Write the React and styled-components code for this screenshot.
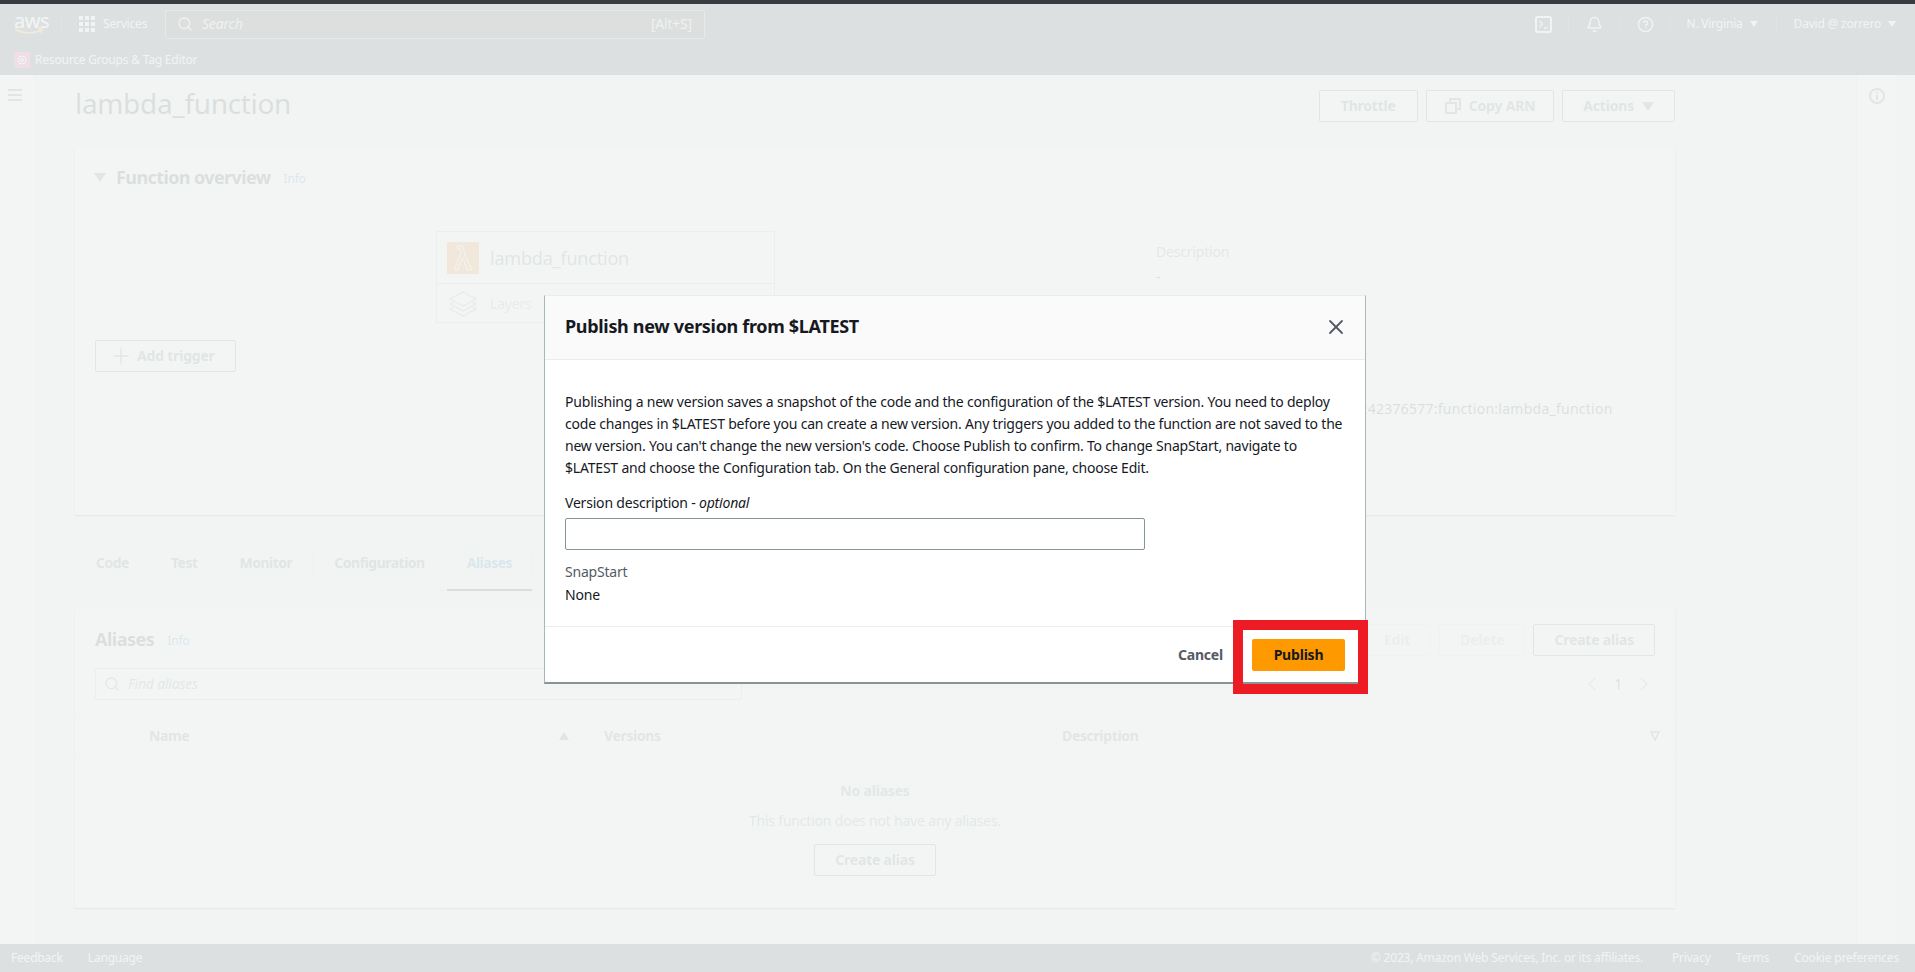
import styled, { createGlobalStyle } from "styled-components"
import { Bell, ChevronLeft, ChevronRight, CircleHelp, Plus, Search, X } from "lucide-react"

const GlobalStyle = createGlobalStyle`
  html, body {
    margin: 0;
    height: 100%;
    overflow: hidden;
    background: #f2f3f3;
  }
  * {
    box-sizing: border-box;
  }
  body {
    font-family: "Noto Sans", "Liberation Sans", sans-serif;
    font-size: 14px;
    line-height: 22px;
    letter-spacing: -0.2px;
    color: #16191f;
  }
`

const Screen = styled.div`
  position: relative;
  width: 1915px;
  height: 972px;
  display: flex;
  flex-direction: column;
  overflow: hidden;
`

const TopStrip = styled.div`
  height: 4px;
  flex: none;
  background: #3a3b40;
`

const Header = styled.header`
  flex: none;
  height: 71px;
  background: #252c35;
  color: #f2f3f3;
  display: flex;
  flex-direction: column;
`

const NavRow = styled.div`
  height: 41px;
  display: flex;
  align-items: center;
  padding: 0 0 1px 14px;
`

const Logo = styled.div`
  position: relative;
  width: 30px;
  height: 24px;
  color: #fff;
  font-size: 20px;
  line-height: 17px;
  text-align: center;
  letter-spacing: -0.5px;
  svg {
    position: absolute;
    left: 0;
    top: 15px;
  }
`

const NavDivider = styled.span`
  width: 1px;
  height: 20px;
  background: #414d5c;
  margin: ${(p) => p.$margin || "0"};
`

const NavText = styled.span`
  margin-left: 8px;
  font-size: 12px;
  color: #f2f3f3;
  white-space: nowrap;
`

const SearchBox = styled.div`
  width: 540px;
  height: 29px;
  margin-left: auto;
  padding: 0 12px 0 11px;
  display: flex;
  align-items: center;
  gap: 9px;
  background: #222324;
  border: 1px solid #879596;
  border-radius: 2px;
  color: #d5dbdb;
  em {
    flex: 1;
    font-size: 14px;
  }
`

const NavLeft = styled.div`
  width: 691px;
  display: flex;
  align-items: center;
`

const NavRight = styled.div`
  margin-left: auto;
  display: flex;
  align-items: center;
`

const NavIcon = styled.span`
  display: flex;
  width: 50px;
  justify-content: center;
  color: #f2f3f3;
`

const Caret = styled.span`
  display: inline-block;
  width: 0;
  height: 0;
  border-left: ${(p) => p.$size ?? 4}px solid transparent;
  border-right: ${(p) => p.$size ?? 4}px solid transparent;
  border-top: ${(p) => (p.$size ?? 4) * 1.5}px solid currentColor;
  margin-left: ${(p) => p.$gap ?? 7}px;
`

const NavMenu = styled.span`
  display: flex;
  align-items: center;
  font-size: 12px;
  color: #f2f3f3;
  padding: ${(p) => p.$padding};
`

const ServiceRow = styled.div`
  height: 30px;
  padding: 0 0 0 14px;
  display: flex;
  align-items: center;
  gap: 5px;
  font-size: 12px;
`

const ServiceIcon = styled.span`
  width: 16px;
  height: 16px;
  background: #e7157b;
  display: flex;
  align-items: center;
  justify-content: center;
`

const Body = styled.div`
  flex: 1;
  min-height: 0;
  display: flex;
`

const LeftRail = styled.aside`
  flex: none;
  width: 36px;
  background: #fff;
  border-right: 1px solid #d5dbdb;
  padding: 14px 0 0 8px;
`

const Burger = styled.div`
  width: 14px;
  height: 12px;
  border-top: 2px solid #545b64;
  border-bottom: 2px solid #545b64;
  position: relative;
  &::after {
    content: "";
    position: absolute;
    left: 0;
    right: 0;
    top: 3px;
    height: 2px;
    background: #545b64;
  }
`

const RightRail = styled.aside`
  flex: none;
  width: 42px;
  margin-right: 17px;
  background: #fff;
  border-left: 1px solid #d5dbdb;
  border-right: 1px solid #d5dbdb;
  padding: 13px 0 0 12px;
  color: #545b64;
`

const Main = styled.main`
  flex: 1;
  min-width: 0;
  padding: 15px 0 0 39px;
`

const Column = styled.div`
  width: 1600px;
`

const TitleRow = styled.div`
  height: 32px;
  margin-bottom: 25px;
  display: flex;
  justify-content: space-between;
`

const PageTitle = styled.h1`
  margin: -1px 0 0;
  font-size: 28px;
  line-height: 28px;
  font-weight: 400;
  letter-spacing: -0.33px;
`

const ButtonRow = styled.div`
  display: flex;
  gap: 8px;
`

const Button = styled.button`
  height: 32px;
  padding: ${(p) => p.$pad || "0 20px"};
  display: inline-flex;
  align-items: center;
  gap: ${(p) => p.$gap ?? 8}px;
  font: inherit;
  font-weight: 700;
  letter-spacing: inherit;
  white-space: nowrap;
  color: ${(p) => (p.$disabled ? "#aab7b8" : "#545b64")};
  background: #fff;
  border: 1px solid ${(p) => (p.$disabled ? "#d5dbdb" : "#545b64")};
  border-radius: 2px;
`

const Card = styled.section`
  background: #fff;
  box-shadow: 0 1px 1px 0 rgba(0, 28, 36, 0.3), 1px 1px 1px 0 rgba(0, 28, 36, 0.15),
    -1px 1px 1px 0 rgba(0, 28, 36, 0.15);
  height: ${(p) => p.$height}px;
`

const OverviewHead = styled.div`
  height: 60px;
  padding: 0 0 0 19px;
  display: flex;
  align-items: center;
  gap: 10px;
  color: #545b64;
  h2 {
    margin: 0 3px 0 0;
    font-size: 18px;
    font-weight: 700;
    letter-spacing: -0.6px;
    color: #16191f;
  }
`

const InfoLink = styled.a`
  padding-top: 3px;
  font-size: 12px;
  color: #0073bb;
`

const OverviewGrid = styled.div`
  display: grid;
  grid-template-columns: 1060px 1fr;
  height: 308px;
`

const Diagram = styled.div`
  display: flex;
  padding: 24px 0 0 20px;
`

const TriggerSlot = styled.div`
  width: 341px;
  padding-top: 109px;
`

const FunctionBox = styled.div`
  width: 339px;
  height: 92px;
  border: 1px solid #aab7b8;
`

const FunctionName = styled.div`
  height: 52px;
  padding: 0 0 0 10px;
  display: flex;
  align-items: center;
  gap: 11px;
  font-size: 18px;
  color: #545b64;
  border-bottom: 1px solid #aab7b8;
`

const LambdaTile = styled.span`
  width: 32px;
  height: 32px;
  background: #ed7100;
  display: flex;
  align-items: center;
  justify-content: center;
`

const LayerRow = styled.div`
  height: 38px;
  padding: 1px 0 0 12px;
  display: flex;
  align-items: center;
  gap: 13px;
  color: #879596;
`

const Details = styled.div`
  border-left: 1px solid #eaeded;
  padding: 34px 0 0 20px;
`

const FieldLabel = styled.div`
  color: #687078;
`

const FieldValue = styled.div`
  margin: 3px 0 ${(p) => p.$after || 0}px;
  color: #16191f;
  white-space: nowrap;
`

const ArnValue = styled(FieldValue)`
  letter-spacing: 0.25px;
`

const TabBar = styled.div`
  height: 76px;
  padding-top: 33px;
  margin-bottom: 17px;
  display: flex;
  border-bottom: 1px solid #d5dbdb;
`

const Tab = styled.div`
  position: relative;
  height: 30px;
  padding: 0 20px 0 21px;
  line-height: 30px;
  font-weight: 700;
  letter-spacing: -0.5px;
  color: ${(p) => (p.$active ? "#0073bb" : "#545b64")};
  border-right: 1px solid #d5dbdb;
  &::after {
    content: ${(p) => (p.$active ? '""' : "none")};
    position: absolute;
    left: 1px;
    right: 0;
    bottom: -13px;
    height: 2px;
    background: #16191f;
  }
`

const AliasHead = styled.div`
  height: 60px;
  padding: 16px 20px 0;
  display: flex;
  align-items: flex-start;
  justify-content: space-between;
`

const AliasTitle = styled.div`
  display: flex;
  align-items: center;
  height: 30px;
  gap: 13px;
  h2 {
    margin: 0;
    font-size: 18px;
    font-weight: 700;
    letter-spacing: -0.5px;
    color: #16191f;
  }
`

const FilterRow = styled.div`
  height: 49px;
  padding: 0 20px;
  display: flex;
  justify-content: space-between;
`

const FindBox = styled.div`
  width: 647px;
  height: 32px;
  padding: 0 8px;
  display: flex;
  align-items: center;
  gap: 8px;
  border: 1px solid #aab7b8;
  border-radius: 2px;
  color: #687078;
  em {
    font-size: 14px;
  }
`

const Pager = styled.div`
  height: 32px;
  margin-right: -1px;
  display: flex;
  align-items: center;
  gap: 10px;
  color: #879596;
  span {
    color: #16191f;
  }
`

const TableHead = styled.div`
  height: 38px;
  display: grid;
  grid-template-columns: 53px 454px 459px 1fr;
  align-items: center;
  font-weight: 700;
  letter-spacing: -0.35px;
  color: #545b64;
  border-top: 1px solid #eaeded;
  border-bottom: 1px solid #eaeded;
`

const HeadCell = styled.div`
  height: 24px;
  padding: 0 7px 0 ${(p) => p.$inset ?? 21}px;
  display: flex;
  align-items: center;
  justify-content: space-between;
  border-left: ${(p) => (p.$first ? "none" : "1px solid #eaeded")};
`

const SortUp = styled.span`
  width: 0;
  height: 0;
  margin-right: 6px;
  border-left: 5px solid transparent;
  border-right: 5px solid transparent;
  border-bottom: 8px solid #545b64;
`

const FilterSlot = styled.span`
  display: flex;
  margin-right: 8px;
`

const Empty = styled.div`
  padding-top: 25px;
  text-align: center;
  color: #687078;
  display: flex;
  flex-direction: column;
  align-items: center;
  strong {
    color: #687078;
  }
  p {
    margin: 8px 0 12px;
  }
`

const Footer = styled.footer`
  flex: none;
  height: 28px;
  padding: 0 16px 0 11px;
  background: #252c35;
  color: #f2f3f3;
  font-size: 12px;
  display: flex;
  align-items: center;
  span {
    white-space: nowrap;
  }
`

const FooterLeft = styled.div`
  display: flex;
  gap: 25px;
`

const FooterRight = styled.div`
  margin-left: auto;
  display: flex;
  gap: 25px;
  span:first-child {
    margin-right: 4px;
  }
`

const Overlay = styled.div`
  position: absolute;
  inset: 4px 0 0 0;
  background: rgba(241, 244, 243, 0.9);
`

const Dialog = styled.div`
  position: absolute;
  left: 544px;
  top: 295px;
  width: 822px;
  height: 389px;
  background: #fff;
  border: 1px solid #aab7b8;
  border-top-color: #eaeded;
  border-bottom: 2px solid #879596;
  display: flex;
  flex-direction: column;
`

const DialogHead = styled.div`
  height: 64px;
  flex: none;
  padding: 0 17px 2px 20px;
  display: flex;
  align-items: center;
  justify-content: space-between;
  background: #fafafa;
  border-bottom: 1px solid #eaeded;
  color: #545b64;
  h2 {
    margin: 0 0 2px;
    font-size: 18px;
    font-weight: 700;
    letter-spacing: -0.32px;
    color: #16191f;
  }
`

const DialogBody = styled.div`
  flex: 1;
  padding: 31px 20px 0;
`

const Lead = styled.p`
  margin: 0 0 13px;
  white-space: nowrap;
`

const FieldName = styled.div`
  color: ${(p) => p.$color || "#16191f"};
  em {
    font-style: italic;
  }
`

const TextInput = styled.input`
  display: block;
  width: 580px;
  height: 32px;
  margin: 4px 0 11px;
  padding: 0 10px;
  font: inherit;
  background: #fff;
  border: 1px solid #879596;
  border-radius: 2px;
  outline: none;
`

const NoneValue = styled.div`
  margin-top: 1px;
`

const DialogFoot = styled.div`
  height: 56px;
  flex: none;
  padding: 12px 20px 0 0;
  display: flex;
  justify-content: flex-end;
  align-items: flex-start;
  gap: 8px;
  border-top: 1px solid #eaeded;
`

const TextButton = styled.button`
  height: 32px;
  padding: 0 21px 0 20px;
  font: inherit;
  font-weight: 700;
  letter-spacing: inherit;
  color: #545b64;
  background: none;
  border: none;
`

const PrimaryButton = styled.button`
  width: 93px;
  height: 32px;
  padding: 0;
  font: inherit;
  font-weight: 700;
  letter-spacing: inherit;
  color: #16191f;
  background: #ff9900;
  border: none;
  border-radius: 2px;
`

const RedMark = styled.div`
  position: absolute;
  left: 1233px;
  top: 620px;
  width: 135px;
  height: 74px;
  border: 10px solid #ed1c24;
  pointer-events: none;
`

const GridIcon = () => (
  <svg width="16" height="16" viewBox="0 0 16 16" fill="#f2f3f3">
    {[0, 6, 12].map((y) =>
      [0, 6, 12].map((x) => <rect key={`${x}-${y}`} x={x} y={y} width="4" height="4" />)
    )}
  </svg>
)

const TerminalIcon = () => (
  <svg width="17" height="17" viewBox="0 0 17 17" fill="none" stroke="currentColor" strokeWidth="2">
    <rect x="1" y="1" width="15" height="15" rx="2" />
    <path d="M4.500 5l3 3-3 3M9 12h3.500" strokeWidth="1.400" />
  </svg>
)

const CopyIcon = () => (
  <svg width="16" height="16" viewBox="0 0 16 16" fill="none" stroke="currentColor" strokeWidth="2">
    <rect x="1" y="5" width="10" height="10" />
    <path d="M5 4V1h10v10h-3" />
  </svg>
)

const LayersIcon = () => (
  <svg width="28" height="26" viewBox="0 0 28 26" fill="none" stroke="#879596" strokeWidth="1.400">
    <path d="M14 1L27 8 14 15 1 8z" />
    <path d="M4 11.500L1 13l13 7 13-7-3-1.500" />
    <path d="M4 16.500L1 18l13 7 13-7-3-1.500" />
  </svg>
)

const LambdaIcon = () => (
  <svg width="20" height="28" viewBox="0 0 20 28" fill="none" stroke="#fff" strokeWidth="1">
    <path d="M4 2h5l8 21h2v3h-5L9.500 13 4.500 26H1l7-17-1.500-4H4z" />
  </svg>
)

const InfoIcon = () => (
  <svg width="16" height="16" viewBox="0 0 16 16" fill="none" stroke="currentColor" strokeWidth="2">
    <circle cx="8" cy="8" r="7" />
    <path d="M8 7v5M8 4v1.500" />
  </svg>
)

const FilterIcon = () => (
  <svg width="10" height="10" viewBox="0 0 10 10" fill="none" stroke="#545b64" strokeWidth="1.500">
    <path d="M1 1h8L5 9z" />
  </svg>
)

const ResourceIcon = () => (
  <svg width="10" height="10" viewBox="0 0 10 10" fill="none" stroke="#fff" strokeWidth="1">
    <circle cx="5" cy="5" r="4" />
    <circle cx="5" cy="5" r="1.500" />
  </svg>
)

export default function App() {
  return (
    <Screen>
      <GlobalStyle />
      <TopStrip />
      <Header>
        <NavRow>
          <NavLeft>
            <Logo>
              aws
              <svg width="30" height="8" viewBox="0 0 30 8" fill="none" stroke="#ff9900" strokeWidth="1.500">
                <path d="M1 2c8 5 19 5 26 1M24 1l4 1-1 4" />
              </svg>
            </Logo>
            <NavDivider $margin="0 17px 0 17px" />
            <GridIcon />
            <NavText>Services</NavText>
            <SearchBox>
              <Search size={16} strokeWidth={2} />
              <em>Search</em>
              <span>[Alt+S]</span>
            </SearchBox>
          </NavLeft>
          <NavRight>
            <NavIcon><TerminalIcon /></NavIcon>
            <NavDivider />
            <NavIcon><Bell size={17} strokeWidth={2} /></NavIcon>
            <NavDivider />
            <NavIcon><CircleHelp size={17} strokeWidth={2} /></NavIcon>
            <NavDivider />
            <NavMenu $padding="0 18px 0 15px">N. Virginia<Caret /></NavMenu>
            <NavDivider />
            <NavMenu $padding="0 19px 0 17px">David @ zorrero<Caret /></NavMenu>
          </NavRight>
        </NavRow>
        <ServiceRow>
          <ServiceIcon><ResourceIcon /></ServiceIcon>
          Resource Groups &amp; Tag Editor
        </ServiceRow>
      </Header>
      <Body>
        <LeftRail><Burger /></LeftRail>
        <Main>
          <Column>
            <TitleRow>
              <PageTitle>lambda_function</PageTitle>
              <ButtonRow>
                <Button $pad="0 21px">Throttle</Button>
                <Button $pad="0 18px"><CopyIcon />Copy ARN</Button>
                <Button>Actions<Caret $size={6} $gap={0} /></Button>
              </ButtonRow>
            </TitleRow>
            <Card $height={368}>
              <OverviewHead>
                <Caret $size={6} $gap={0} />
                <h2>Function overview</h2>
                <InfoLink>Info</InfoLink>
              </OverviewHead>
              <OverviewGrid>
                <Diagram>
                  <TriggerSlot>
                    <Button $pad="0 20px 0 13px" $gap={4}><Plus size={24} strokeWidth={1.4} />Add trigger</Button>
                  </TriggerSlot>
                  <FunctionBox>
                    <FunctionName>
                      <LambdaTile><LambdaIcon /></LambdaTile>
                      lambda_function
                    </FunctionName>
                    <LayerRow><LayersIcon />Layers</LayerRow>
                  </FunctionBox>
                </Diagram>
                <Details>
                  <FieldLabel>Description</FieldLabel>
                  <FieldValue $after={85}>-</FieldValue>
                  <FieldLabel>Function ARN</FieldLabel>
                  <ArnValue>arn:aws:lambda:us-east-1:209242376577:function:lambda_function</ArnValue>
                </Details>
              </OverviewGrid>
            </Card>
            <TabBar>
              <Tab>Code</Tab>
              <Tab>Test</Tab>
              <Tab>Monitor</Tab>
              <Tab>Configuration</Tab>
              <Tab $active>Aliases</Tab>
            </TabBar>
            <Card $height={300}>
              <AliasHead>
                <AliasTitle>
                  <h2>Aliases</h2>
                  <InfoLink>Info</InfoLink>
                </AliasTitle>
                <ButtonRow>
                  <Button $disabled>Edit</Button>
                  <Button $disabled>Delete</Button>
                  <Button>Create alias</Button>
                </ButtonRow>
              </AliasHead>
              <FilterRow>
                <FindBox>
                  <Search size={16} strokeWidth={2} />
                  <em>Find aliases</em>
                </FindBox>
                <Pager>
                  <ChevronLeft size={24} strokeWidth={1.4} />
                  <span>1</span>
                  <ChevronRight size={24} strokeWidth={1.4} />
                </Pager>
              </FilterRow>
              <TableHead>
                <HeadCell $first />
                <HeadCell $inset={20}>Name<SortUp /></HeadCell>
                <HeadCell>Versions</HeadCell>
                <HeadCell $first>Description<FilterSlot><FilterIcon /></FilterSlot></HeadCell>
              </TableHead>
              <Empty>
                <strong>No aliases</strong>
                <p>This function does not have any aliases.</p>
                <Button>Create alias</Button>
              </Empty>
            </Card>
          </Column>
        </Main>
        <RightRail><InfoIcon /></RightRail>
      </Body>
      <Footer>
        <FooterLeft>
          <span>Feedback</span>
          <span>Language</span>
        </FooterLeft>
        <FooterRight>
          <span>© 2023, Amazon Web Services, Inc. or its affiliates.</span>
          <span>Privacy</span>
          <span>Terms</span>
          <span>Cookie preferences</span>
        </FooterRight>
      </Footer>
      <Overlay />
      <Dialog>
        <DialogHead>
          <h2>Publish new version from $LATEST</h2>
          <X size={24} strokeWidth={1.8} />
        </DialogHead>
        <DialogBody>
          <Lead>
            Publishing a new version saves a snapshot of the code and the configuration of the $LATEST version. You need to deploy<br />
            code changes in $LATEST before you can create a new version. Any triggers you added to the function are not saved to the<br />
            new version. You can't change the new version's code. Choose Publish to confirm. To change SnapStart, navigate to<br />
            $LATEST and choose the Configuration tab. On the General configuration pane, choose Edit.
          </Lead>
          <FieldName>Version description - <em>optional</em></FieldName>
          <TextInput />
          <FieldName $color="#545b64">SnapStart</FieldName>
          <NoneValue>None</NoneValue>
        </DialogBody>
        <DialogFoot>
          <TextButton>Cancel</TextButton>
          <PrimaryButton>Publish</PrimaryButton>
        </DialogFoot>
      </Dialog>
      <RedMark />
    </Screen>
  )
}
